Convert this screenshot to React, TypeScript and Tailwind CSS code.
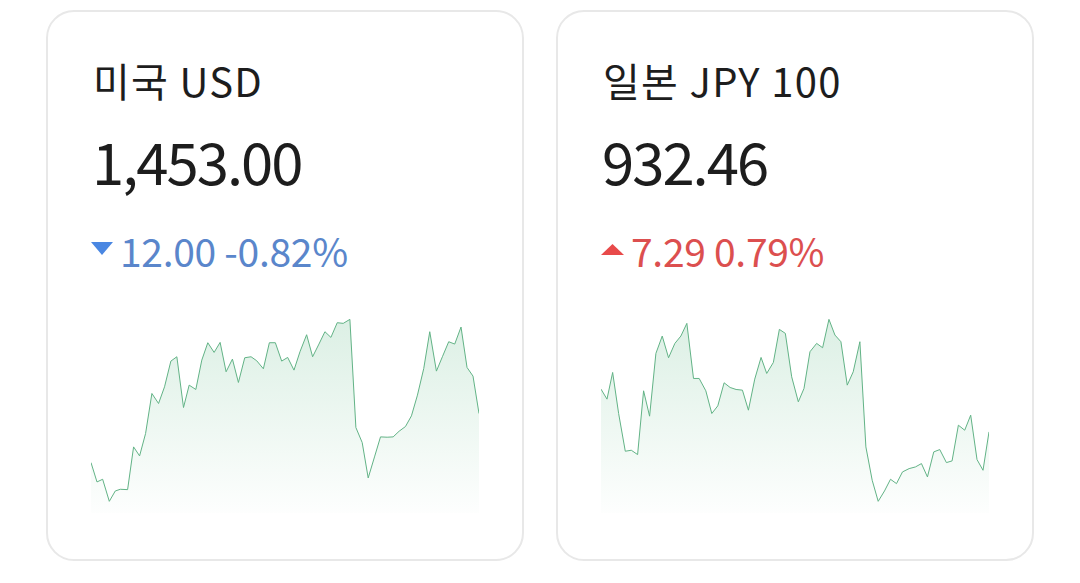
import React from "react";

const usd: [number, number][] = [
  [62, 487], [80, 545], [97, 537], [117, 603], [135, 572], [150, 567], [172, 568], [190, 440], [208, 467], [226, 400],
  [245, 280], [265, 310], [283, 260], [302, 183], [320, 170], [340, 322], [357, 255], [377, 268], [395, 180], [413, 128],
  [432, 157], [450, 127], [468, 215], [487, 177], [505, 247], [524, 173], [543, 170], [560, 182], [580, 206], [598, 128],
  [616, 128], [635, 183], [653, 172], [672, 210], [690, 155], [710, 104], [728, 170], [747, 132], [765, 95], [783, 112],
  [802, 68], [820, 70], [840, 58], [858, 382], [877, 427], [895, 533], [914, 470], [932, 410], [952, 411], [970, 410],
  [988, 393], [1007, 379], [1025, 347], [1043, 285], [1062, 205], [1080, 95], [1100, 213], [1118, 170], [1137, 125],
  [1155, 132], [1174, 81], [1192, 202], [1210, 228], [1228, 340],
];

const jpy: [number, number][] = [
  [62, 267], [80, 297], [97, 217], [115, 340], [135, 453], [153, 450], [172, 463], [190, 272], [208, 348], [227, 160],
  [246, 108], [265, 173], [284, 130], [302, 108], [320, 70], [340, 235], [357, 235], [377, 272], [395, 340], [413, 317],
  [432, 248], [450, 262], [468, 268], [487, 270], [505, 330], [524, 237], [543, 172], [560, 220], [580, 187], [598, 88],
  [616, 100], [635, 230], [655, 305], [672, 265], [690, 155], [710, 130], [728, 143], [747, 58], [765, 105], [783, 125],
  [802, 255], [820, 215], [840, 125], [858, 440], [877, 540], [895, 603], [914, 572], [932, 537], [950, 550], [968, 515],
  [988, 505], [1007, 500], [1025, 490], [1043, 530], [1062, 455], [1080, 448], [1100, 487], [1117, 482], [1136, 375],
  [1155, 390], [1173, 345], [1192, 478], [1210, 510], [1228, 395],
];

function Chart({ pts, id }: { pts: [number, number][]; id: string }) {
  const line = pts.map((p, i) => `${i === 0 ? "M" : "L"}${p[0]} ${p[1]}`).join(" ");
  const area = `${line} L1228 638 L62 638 Z`;
  return (
    <svg
      className="block w-full h-[213px]"
      viewBox="62 0 1166 638"
      preserveAspectRatio="none"
    >
      <defs>
        <linearGradient id={id} x1="0" y1="57" x2="0" y2="638" gradientUnits="userSpaceOnUse">
          <stop offset="0" stopColor="#4fb27a" stopOpacity="0.2" />
          <stop offset="1" stopColor="#4fb27a" stopOpacity="0.01" />
        </linearGradient>
      </defs>
      <path d={area} fill={`url(#${id})`} />
      <path
        d={line}
        fill="none"
        stroke="#62b386"
        strokeWidth="1"
        vectorEffect="non-scaling-stroke"
        strokeLinejoin="round"
      />
    </svg>
  );
}

function Card({
  title,
  value,
  up,
  change,
  pts,
  id,
}: {
  title: string;
  value: string;
  up: boolean;
  change: string;
  pts: [number, number][];
  id: string;
}) {
  return (
    <div className="w-[478px] rounded-[28px] border-2 border-[#e8e8e8] bg-white px-[43px] pt-[46px] pb-[46px] flex flex-col">
      <div className="h-[44px] leading-[44px] text-[40px] tracking-[1.3px] text-[#1d1d1d] pl-[2px] whitespace-nowrap">{title}</div>
      <div className="mt-[28px] h-[60px] leading-[60px] text-[58px] tracking-[-2px] text-[#1d1d1d] pl-[1px] whitespace-nowrap">{value}</div>
      <div className="mt-[38px] h-[44px] flex items-center gap-[7px] whitespace-nowrap">
        {up ? (
          <svg width="23" height="11" viewBox="0 0 23 11" className="block mb-[1px]">
            <polygon points="11.5,0 23,11 0,11" fill="#e84a4a" />
          </svg>
        ) : (
          <svg width="22" height="13" viewBox="0 0 22 13" className="block mb-[4px]">
            <polygon points="0,0 22,0 11,13" fill="#4a87e2" />
          </svg>
        )}
        <span className={`leading-[44px] text-[39px] tracking-[-0.3px] ${up ? "text-[#dc4f4f]" : "text-[#5a86cb]"}`}>{change}</span>
      </div>
      <div className="mt-[28px]">
        <Chart pts={pts} id={id} />
      </div>
    </div>
  );
}

export default function App() {
  return (
    <div
      className="w-[1080px] h-[583px] bg-white flex items-start gap-[32px] pl-[46px] pt-[10px]"
      style={{ fontFamily: '"Noto Sans CJK KR", "Noto Sans", sans-serif' }}
    >
      <Card title="미국 USD" value="1,453.00" up={false} change="12.00 -0.82%" pts={usd} id="g1" />
      <Card title="일본 JPY 100" value="932.46" up={true} change="7.29 0.79%" pts={jpy} id="g2" />
    </div>
  );
}
